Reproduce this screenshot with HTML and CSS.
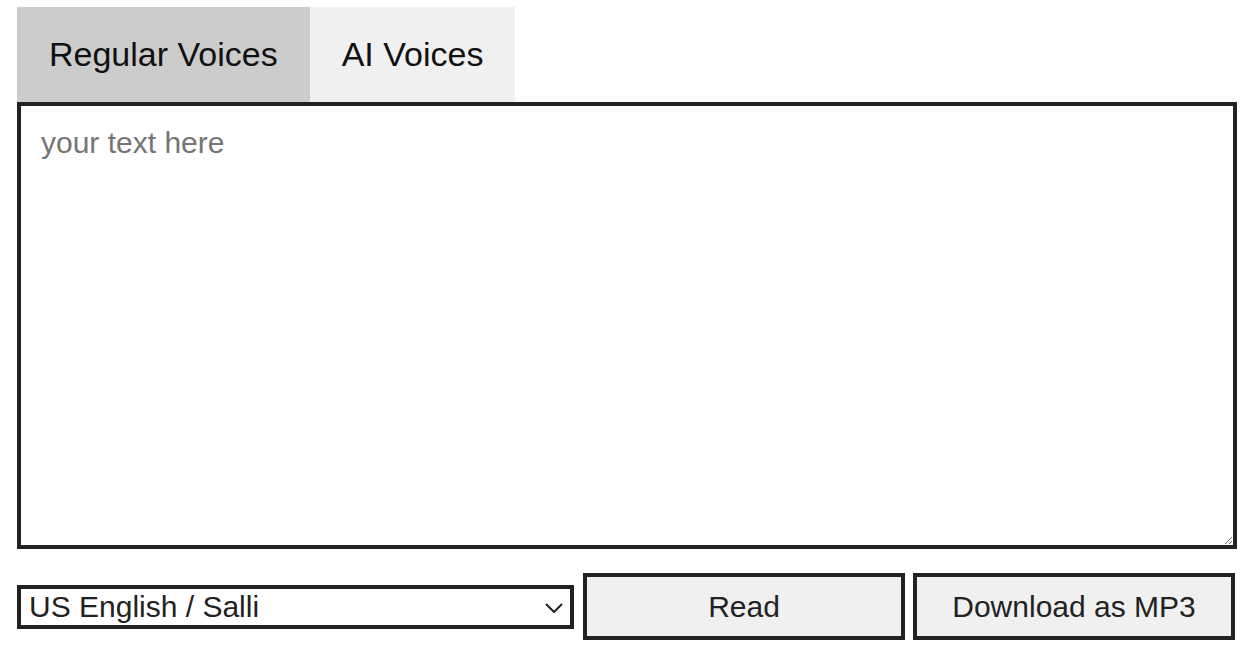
FILE: index.html
```html
<!DOCTYPE html>
<html lang="en">
<head>
  <meta charset="UTF-8">
  <meta name="viewport" content="width=device-width, initial-scale=1.0">
  <title>Text to Speech</title>
  <link rel="stylesheet" href="styles.css">
</head>
<body>
  <div class="container">
    <div class="tabs">
      <button class="tab active">Regular Voices</button>
      <button class="tab">AI Voices</button>
    </div>
    <textarea class="text-box" placeholder="your text here"></textarea>
    <div class="controls">
      <div class="select-wrap">
        <select class="voice-select">
          <option>US English / Salli</option>
          <option>US English / Joanna</option>
          <option>UK English / Amy</option>
        </select>
        <!-- dropdown arrow -->
        <svg class="select-arrow" width="18" height="10" viewBox="0 0 18 10">
          <polyline points="1,1 9,9 17,1" fill="none" stroke="#222" stroke-width="2"/>
        </svg>
      </div>
      <button class="action-button">Read</button>
      <button class="action-button">Download as MP3</button>
    </div>
  </div>
</body>
</html>
```

FILE: styles.css
```css
body {
  background-color: white;
  margin: 0;
  padding: 7px 17px;
  font-family: "Liberation Sans", Arial, sans-serif;
}
.container {
  width: 1220px;
  display: flex;
  flex-direction: column;
}
.tabs {
  display: flex;
}
.tab {
  font-family: "Liberation Sans", Arial, sans-serif;
  font-size: 34px;
  color: #111;
  background-color: #f0f0f0;
  border: none;
  height: 95px;
  padding: 0 32px;
  cursor: pointer;
}
.tab.active {
  background-color: #cccccc;
}
.text-box {
  box-sizing: border-box;
  width: 1220px;
  height: 447px;
  border: 4px solid #222;
  padding: 20px 20px;
  margin: 0;
  font-family: "Liberation Sans", Arial, sans-serif;
  font-size: 30px;
  color: #222;
  outline: none;
}
.text-box::placeholder {
  color: #757575;
}
.controls {
  display: flex;
  align-items: center;
  margin-top: 24px;
}
.select-wrap {
  position: relative;
  flex-shrink: 0;
  margin-right: 9px;
}
.voice-select {
  box-sizing: border-box;
  width: 557px;
  height: 44px;
  border: 4px solid #222;
  border-radius: 0;
  padding: 0 8px;
  -webkit-appearance: none;
  appearance: none;
  font-family: "Liberation Sans", Arial, sans-serif;
  font-size: 30px;
  color: #222;
  background-color: white;
  display: block;
}
.select-arrow {
  position: absolute;
  right: 11px;
  top: 18px;
  pointer-events: none;
}
.action-button {
  box-sizing: border-box;
  flex-shrink: 0;
  width: 322px;
  height: 67px;
  border: 4px solid #222;
  background-color: #f0f0f0;
  font-family: "Liberation Sans", Arial, sans-serif;
  font-size: 30px;
  color: #222;
  cursor: pointer;
}
.action-button + .action-button {
  margin-left: 8px;
}
.action-button:hover {
  background-color: #e4e4e4;
}
```
